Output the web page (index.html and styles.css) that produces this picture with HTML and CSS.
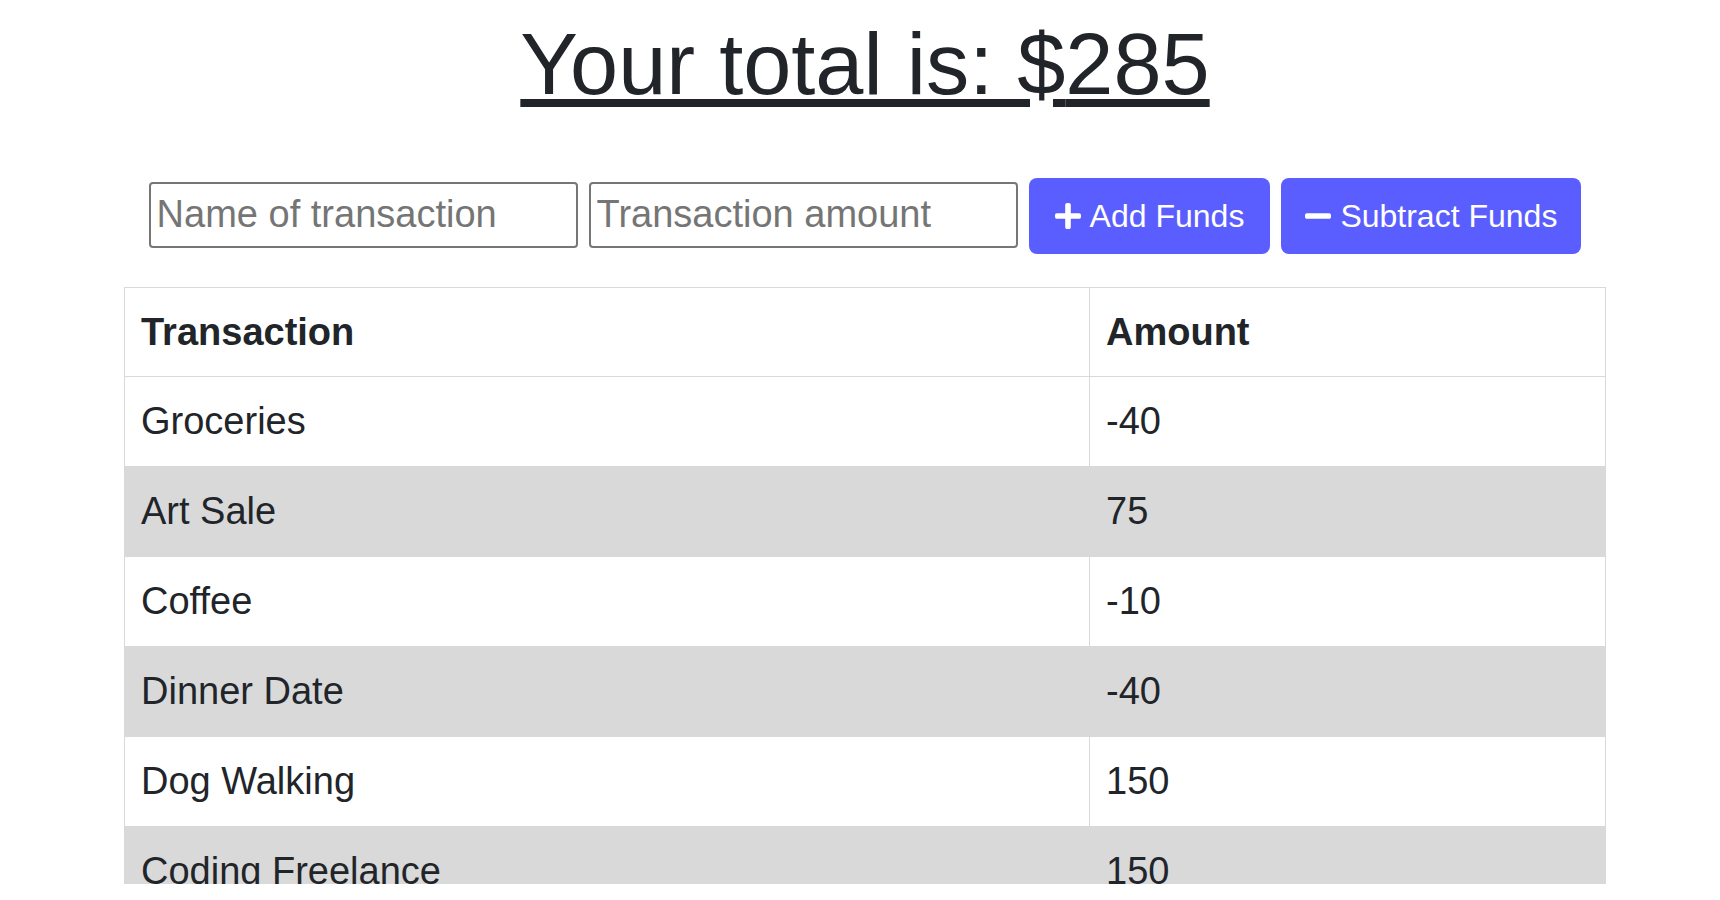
FILE: index.html
```html
<!DOCTYPE html>
<html lang="en">
<head>
<meta charset="utf-8">
<title>Budget Tracker</title>
<link rel="stylesheet" href="styles.css">
</head>
<body>
<main class="page">
  <h1 class="total">Your total is: $<span class="total-value">285</span></h1>
  <form class="entry-form">
    <input class="field" type="text" placeholder="Name of transaction">
    <input class="field" type="text" placeholder="Transaction amount">
    <button class="btn" type="button">
      <svg class="btn-icon" viewBox="0 32 448 448" aria-hidden="true"><path d="M416 208H272V64c0-17.67-14.33-32-32-32h-32c-17.67 0-32 14.33-32 32v144H32c-17.67 0-32 14.33-32 32v32c0 17.67 14.33 32 32 32h144v144c0 17.67 14.33 32 32 32h32c17.67 0 32-14.33 32-32V304h144c17.67 0 32-14.33 32-32v-32c0-17.67-14.33-32-32-32z"/></svg>
      <span>Add Funds</span>
    </button>
    <button class="btn btn-sub" type="button">
      <svg class="btn-icon" viewBox="0 32 448 448" aria-hidden="true"><path d="M416 208H32c-17.67 0-32 14.33-32 32v32c0 17.67 14.33 32 32 32h384c17.67 0 32-14.33 32-32v-32c0-17.67-14.33-32-32-32z"/></svg>
      <span>Subtract Funds</span>
    </button>
  </form>
  <div class="table-wrap">
    <table class="tx-table">
      <thead>
        <tr><th class="col-name">Transaction</th><th>Amount</th></tr>
      </thead>
      <tbody>
        <tr><td>Groceries</td><td>-40</td></tr>
        <tr><td>Art Sale</td><td>75</td></tr>
        <tr><td>Coffee</td><td>-10</td></tr>
        <tr><td>Dinner Date</td><td>-40</td></tr>
        <tr><td>Dog Walking</td><td>150</td></tr>
        <tr><td>Coding Freelance</td><td>150</td></tr>
      </tbody>
    </table>
  </div>
</main>
</body>
</html>
```

FILE: styles.css
```css
html, body {
  margin: 0;
  background: #ffffff;
}

body {
  padding-left: 10px;
  font-family: "Liberation Sans", Arial, Helvetica, sans-serif;
  color: #212529;
  font-size: 38px;
  line-height: 1.5;
}

.page {
  width: 1482px;
  margin: 0 auto;
  display: flex;
  flex-direction: column;
  align-items: center;
}

.total {
  margin: 13px 0 61px;
  font-size: 86.5px;
  font-weight: 400;
  line-height: 1.2;
  text-decoration: underline;
  text-align: center;
}

.entry-form {
  display: flex;
  align-items: flex-start;
  gap: 11px;
  margin: 0 0 33px;
}

.field {
  box-sizing: border-box;
  width: 429px;
  height: 66px;
  margin: 4px 0 0;
  padding: 0 6px;
  border: 2px solid #767676;
  border-radius: 4px;
  font-family: inherit;
  font-size: 38px;
  color: #212529;
  background: #fff;
}

.field::placeholder {
  color: #757575;
  opacity: 1;
}

.btn {
  display: inline-flex;
  align-items: center;
  gap: 9px;
  height: 76px;
  margin: 0;
  padding: 0 26px;
  border: 0;
  border-radius: 8px;
  background: #5b5eff;
  color: #ffffff;
  font-family: inherit;
  font-size: 32px;
  line-height: 1.5;
  cursor: pointer;
}

.btn-sub {
  padding: 0 24px 0 24px;
}

.btn-icon {
  width: 26px;
  height: 26px;
  fill: #ffffff;
  flex: none;
}

.table-wrap {
  width: 1482px;
  height: 597px;
  overflow: hidden;
}

.tx-table {
  width: 1482px;
  border-collapse: collapse;
  border: 1px solid #d9d9d9;
}

.tx-table th,
.tx-table td {
  padding: 16px 16px;
  border: 1px solid #d9d9d9;
  text-align: left;
  vertical-align: middle;
  line-height: 1.5;
}

.tx-table th {
  padding: 16px 16px 15px;
  font-weight: 700;
}

.col-name {
  width: 932px;
}

.tx-table tbody tr:nth-child(even) {
  background: #d9d9d9;
}
```
